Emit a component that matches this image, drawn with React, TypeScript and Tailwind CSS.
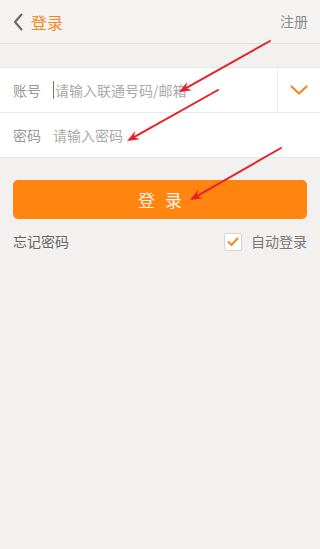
import { useState } from "react";

const font = "font-['Noto_Sans_CJK_SC','Noto_Sans',sans-serif]";

function Arrow({ x1, y1, x2, y2 }: { x1: number; y1: number; x2: number; y2: number }) {
  const angle = Math.atan2(y2 - y1, x2 - x1);
  const len = 13;
  const spread = 0.38;
  const ax = x2 - len * Math.cos(angle - spread);
  const ay = y2 - len * Math.sin(angle - spread);
  const bx = x2 - len * Math.cos(angle + spread);
  const by = y2 - len * Math.sin(angle + spread);
  const mx = x2 - 8 * Math.cos(angle);
  const my = y2 - 8 * Math.sin(angle);

  return (
    <g>
      <line x1={x1} y1={y1} x2={mx} y2={my} stroke="#e8202a" strokeWidth="2" strokeLinecap="round" />
      <polygon points={`${x2},${y2} ${ax},${ay} ${mx},${my} ${bx},${by}`} fill="#e8202a" />
    </g>
  );
}

export default function App() {
  const [autoLogin, setAutoLogin] = useState(true);

  return (
    <div className={`relative h-[549px] w-[320px] overflow-hidden bg-[#f2f1f0] ${font}`}>
      <div className="flex h-[44px] items-center justify-between border-b border-[#e2e0de] bg-[#f4f3f2] px-3">
        <div className="flex items-center gap-2">
          <svg width="10" height="18" viewBox="0 0 10 18" className="ml-[1px]">
            <path d="M8.5 1.5 L2 9 L8.5 16.5" fill="none" stroke="#666" strokeWidth="2" strokeLinecap="round" strokeLinejoin="round" />
          </svg>
          <span className="text-[16px] text-[#f5891f]">登录</span>
        </div>
        <span className="text-[14px] text-[#8a8a8a]">注册</span>
      </div>

      <div className="mt-[23px] border-y border-[#e8e6e4] bg-white">
        <div className="flex h-[45px] items-center border-b border-[#ebe9e7]">
          <span className="w-[53px] shrink-0 whitespace-nowrap pl-[13px] text-[14px] text-[#999]">账号</span>
          <div className="flex flex-1 items-center">
            <span className="mr-[1px] h-[18px] w-px bg-[#777]" />
            <span className="whitespace-nowrap text-[14px] text-[#aaa]">请输入联通号码/邮箱</span>
          </div>
          <div className="flex h-full w-[43px] items-center justify-center border-l border-[#eeecea]">
            <svg width="18" height="10" viewBox="0 0 18 10">
              <path d="M1.5 1.5 L9 8.5 L16.5 1.5" fill="none" stroke="#f5891f" strokeWidth="2.2" strokeLinecap="round" strokeLinejoin="round" />
            </svg>
          </div>
        </div>
        <div className="flex h-[44px] items-center">
          <span className="w-[53px] shrink-0 whitespace-nowrap pl-[13px] text-[14px] text-[#999]">密码</span>
          <span className="whitespace-nowrap text-[14px] text-[#aaa]">请输入密码</span>
        </div>
      </div>

      <div className="mt-[22px] px-[13px]">
        <button className="flex h-[39px] w-full items-center justify-center rounded-[5px] bg-[#ff8410] text-[17px] tracking-[10px] text-[#fff3e6]">
          <span className="pl-[10px]">登录</span>
        </button>
      </div>

      <div className="mt-[12px] flex items-center justify-between px-[13px]">
        <span className="text-[14px] text-[#666]">忘记密码</span>
        <button className="flex items-center gap-[9px]" onClick={() => setAutoLogin(!autoLogin)}>
          <span className="flex h-[18px] w-[18px] items-center justify-center rounded-[2px] border border-[#d6d3d0] bg-white">
            {autoLogin && (
              <svg width="12" height="10" viewBox="0 0 12 10">
                <path d="M1.5 5 L4.5 8 L10.5 1.5" fill="none" stroke="#f5891f" strokeWidth="2" strokeLinecap="round" strokeLinejoin="round" />
              </svg>
            )}
          </span>
          <span className="text-[14px] text-[#777]">自动登录</span>
        </button>
      </div>

      <svg className="pointer-events-none absolute left-0 top-0" width="320" height="549">
        <Arrow x1={270} y1={41} x2={179} y2={92} />
        <Arrow x1={218} y1={90} x2={127} y2={141} />
        <Arrow x1={281} y1={148} x2={190} y2={200} />
      </svg>
    </div>
  );
}
